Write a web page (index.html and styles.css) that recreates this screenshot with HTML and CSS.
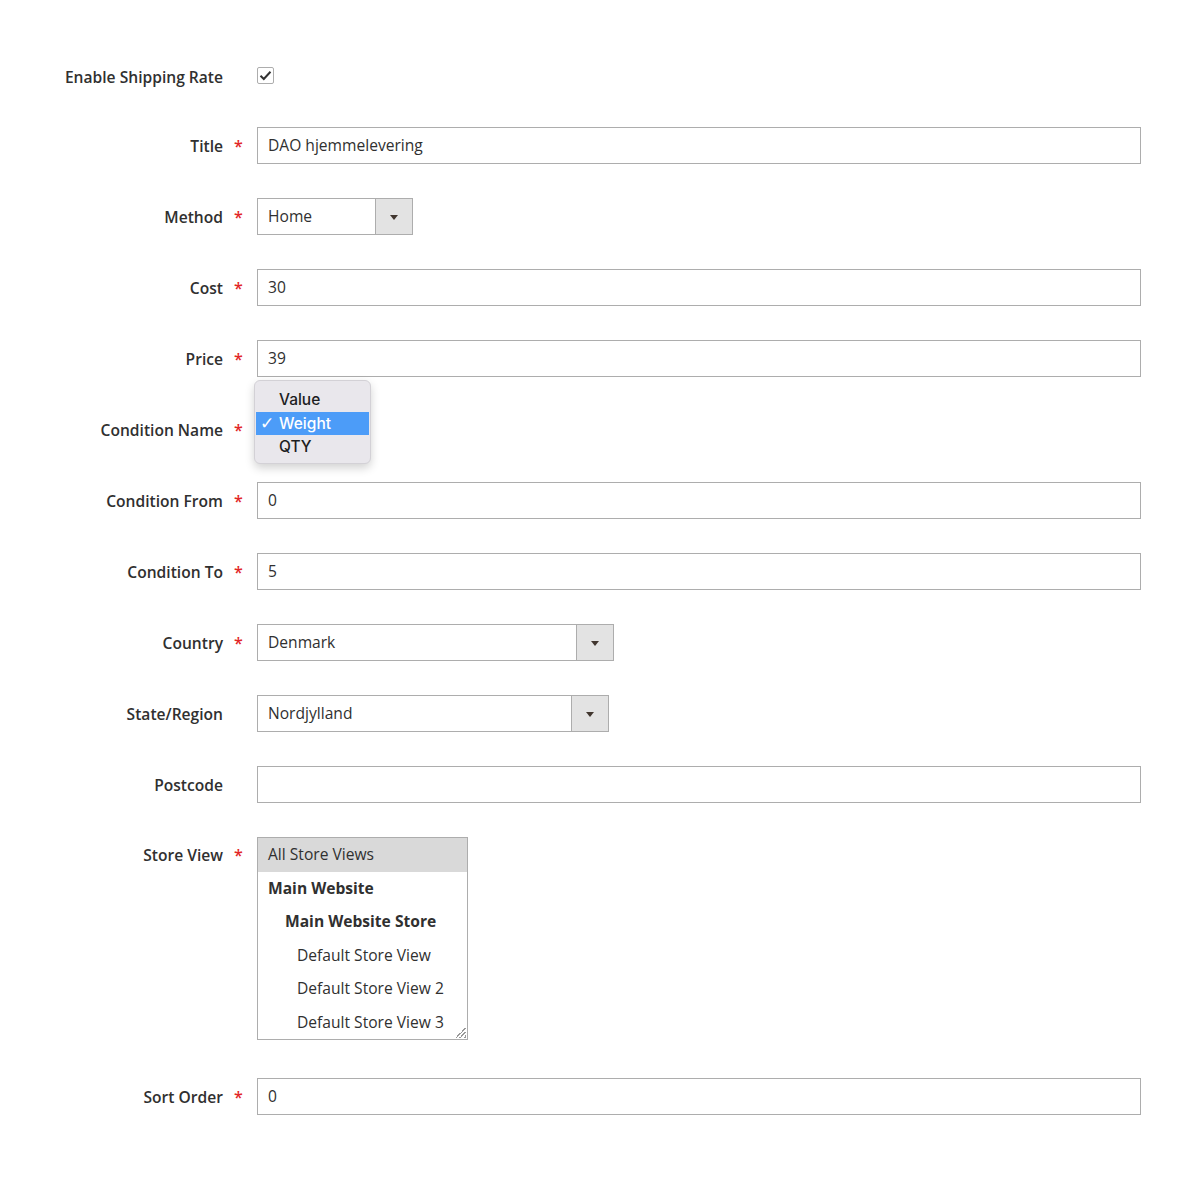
FILE: index.html
```html
<!DOCTYPE html>
<html lang="en">
<head>
    <meta charset="UTF-8">
    <title>Shipping Rate</title>
    <link rel="stylesheet" href="styles.css">
</head>
<body>

<form class="rate-form">
    <div class="field field-check">
        <label class="label">Enable Shipping Rate</label>
        <span class="req"></span>
        <div class="control">
            <span class="checkbox">
                <svg width="13" height="11" viewBox="0 0 13 11"><path d="M1.5 5.8 L4.8 9 L11.5 1.8" fill="none" stroke="#333" stroke-width="2"/></svg>
            </span>
        </div>
    </div>

    <div class="field">
        <label class="label">Title</label>
        <span class="req">*</span>
        <div class="control"><div class="input">DAO hjemmelevering</div></div>
    </div>

    <div class="field">
        <label class="label">Method</label>
        <span class="req">*</span>
        <div class="control">
            <div class="select select-method">
                <span class="select-value">Home</span>
                <span class="select-arrow"></span>
            </div>
        </div>
    </div>

    <div class="field">
        <label class="label">Cost</label>
        <span class="req">*</span>
        <div class="control"><div class="input">30</div></div>
    </div>

    <div class="field">
        <label class="label">Price</label>
        <span class="req">*</span>
        <div class="control"><div class="input">39</div></div>
    </div>

    <div class="field">
        <label class="label">Condition Name</label>
        <span class="req">*</span>
        <div class="control control-popup">
            <ul class="popup-menu">
                <li>Value</li>
                <li class="selected"><span class="tick">✓</span>Weight</li>
                <li>QTY</li>
            </ul>
        </div>
    </div>

    <div class="field">
        <label class="label">Condition From</label>
        <span class="req">*</span>
        <div class="control"><div class="input">0</div></div>
    </div>

    <div class="field">
        <label class="label">Condition To</label>
        <span class="req">*</span>
        <div class="control"><div class="input">5</div></div>
    </div>

    <div class="field">
        <label class="label">Country</label>
        <span class="req">*</span>
        <div class="control">
            <div class="select select-country">
                <span class="select-value">Denmark</span>
                <span class="select-arrow"></span>
            </div>
        </div>
    </div>

    <div class="field">
        <label class="label">State/Region</label>
        <span class="req"></span>
        <div class="control">
            <div class="select select-region">
                <span class="select-value">Nordjylland</span>
                <span class="select-arrow"></span>
            </div>
        </div>
    </div>

    <div class="field">
        <label class="label">Postcode</label>
        <span class="req"></span>
        <div class="control"><div class="input"></div></div>
    </div>

    <div class="field field-multi">
        <label class="label">Store View</label>
        <span class="req">*</span>
        <div class="control">
            <ul class="multiselect">
                <li class="active">All Store Views</li>
                <li class="group">Main Website</li>
                <li class="group sub">Main Website Store</li>
                <li class="view">Default Store View</li>
                <li class="view">Default Store View 2</li>
                <li class="view">Default Store View 3</li>
                <span class="grip"></span>
            </ul>
        </div>
    </div>

    <div class="field">
        <label class="label">Sort Order</label>
        <span class="req">*</span>
        <div class="control"><div class="input">0</div></div>
    </div>
</form>

</body>
</html>
```

FILE: styles.css
```css
body {
    margin: 0;
    padding: 0;
    background: #fff;
    color: #303030;
    font-family: 'Open Sans', sans-serif;
    font-size: 15.6px;
}

.rate-form {
    padding-top: 58px;
    width: 1141px;
}

.field {
    display: grid;
    grid-template-columns: 223px 34px 884px;
    align-items: center;
    min-height: 37px;
    margin-bottom: 34px;
}

.field-check {
    margin-bottom: 32px;
}

.field-multi {
    align-items: start;
    margin-bottom: 38px;
}

.field-multi .label,
.field-multi .req {
    line-height: 37px;
}

.label {
    text-align: right;
    font-weight: 600;
    color: #303030;
}

.req {
    color: #e22626;
    font-weight: 600;
    padding-left: 11px;
    font-size: 16px;
}

.control {
    position: relative;
}

.checkbox {
    display: flex;
    align-items: center;
    justify-content: center;
    width: 15px;
    height: 15px;
    border: 1px solid #adadad;
    border-radius: 2px;
    margin-top: -3px;
}

.input {
    box-sizing: border-box;
    height: 37px;
    border: 1px solid #adadad;
    padding: 0 10px;
    line-height: 35px;
    color: #303030;
}

.select {
    box-sizing: border-box;
    display: flex;
    height: 37px;
    border: 1px solid #adadad;
}

.select-value {
    flex: 1;
    padding: 0 10px;
    line-height: 35px;
}

.select-arrow {
    width: 36px;
    background: #e3e3e3;
    border-left: 1px solid #adadad;
    position: relative;
}

.select-arrow::after {
    content: '';
    position: absolute;
    left: 50%;
    top: 50%;
    margin: -2px 0 0 -4px;
    border-left: 4px solid transparent;
    border-right: 4px solid transparent;
    border-top: 5px solid #41362f;
}

.select-method {
    width: 156px;
}

.select-country {
    width: 357px;
}

.select-region {
    width: 352px;
}

.control-popup {
    height: 37px;
}

.popup-menu {
    position: absolute;
    left: -3px;
    top: -31px;
    width: 117px;
    height: 84px;
    box-sizing: border-box;
    margin: 0;
    padding: 7px 1px 0;
    list-style: none;
    background: #e9e7ec;
    border: 1px solid #d3d1d6;
    border-radius: 6px;
    box-shadow: 0 4px 10px rgba(0, 0, 0, 0.18);
    font-family: 'Inter', 'Liberation Sans', sans-serif;
    font-size: 15.5px;
    font-weight: 500;
    color: #1d1d1f;
}

.popup-menu li {
    height: 23.5px;
    line-height: 23.5px;
    padding-left: 23px;
    position: relative;
}

.popup-menu li.selected {
    background: #4c9cf8;
    color: #fff;
}

.tick {
    position: absolute;
    left: 4px;
    font-size: 17px;
    font-family: 'DejaVu Sans', sans-serif;
}

.multiselect {
    position: relative;
    box-sizing: border-box;
    width: 211px;
    height: 203px;
    margin: 0;
    padding: 0;
    list-style: none;
    border: 1px solid #adadad;
}

.multiselect li {
    height: 33.5px;
    line-height: 33.5px;
    padding-left: 10px;
    white-space: nowrap;
}

.multiselect li.active {
    background: #d9d9d9;
}

.multiselect li.group {
    font-weight: 700;
}

.multiselect li.sub {
    padding-left: 27px;
}

.multiselect li.view {
    padding-left: 39px;
}

.grip {
    position: absolute;
    right: 1px;
    bottom: 1px;
    width: 10px;
    height: 10px;
    background: linear-gradient(135deg, transparent 45%, #999 45%, #999 52%, transparent 52%, transparent 65%, #999 65%, #999 72%, transparent 72%, transparent 85%, #999 85%);
}
```
